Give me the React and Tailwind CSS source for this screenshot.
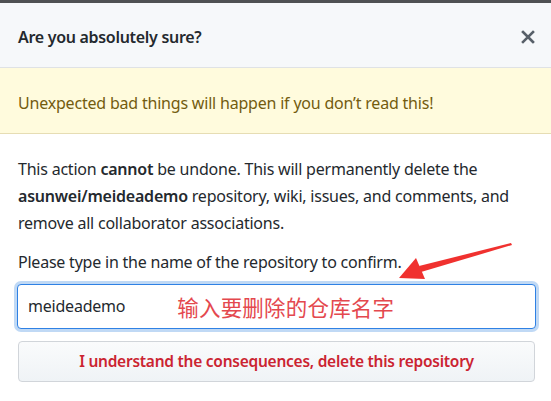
import React from 'react'

// ─── Close glyph ──────────────────────────────────────────────────────────────
function CloseIcon() {
  return (
    <svg width="14" height="14" viewBox="0 0 14 14" aria-hidden="true">
      <path d="M2 2 L12 12 M12 2 L2 12" stroke="#586069" strokeWidth="2.6" strokeLinecap="square" />
    </svg>
  )
}

// ─── Red annotation arrow drawn over the page ────────────────────────────────
function AnnotationArrow() {
  return (
    <svg
      className="absolute left-0 top-0 pointer-events-none"
      width="551"
      height="401"
      viewBox="0 0 551 401"
      aria-hidden="true"
    >
      <path d="M511 243 L512 245 L421 272 L419 266 Z" fill="#f0312f" />
      <path d="M399 278 L416 258 L425 279 Z" fill="#f0312f" />
    </svg>
  )
}

export default function App() {
  return (
    <div
      className="relative w-[551px] h-[401px] overflow-hidden bg-white text-[#24292e]"
      style={{ fontFamily: '"Noto Sans", "Noto Sans CJK SC", sans-serif' }}
    >
      <div className="h-[3px] bg-[#4f5153]" />

      {/* Header */}
      <div className="h-[65px] flex items-center justify-between pt-[3px] pl-[18px] pr-[16px] bg-[#f6f8fa] border-b border-[#dfe2e5]">
        <h3 className="text-[16px] font-semibold tracking-[-0.3px]">Are you absolutely sure?</h3>
        <CloseIcon />
      </div>

      {/* Flash warning */}
      <div className="h-[66px] flex items-center pt-[4px] pl-[18px] bg-[#fffbdd] border-b border-[#e6ddb4] text-[16px] text-[#735c0f] tracking-[-0.2px]">
        Unexpected bad things will happen if you don’t read this!
      </div>

      {/* Body */}
      <div className="pt-[22px] pl-[18px] pr-[15px] text-[16px] leading-[27px] tracking-[-0.22px]">
        <p>
          This action <strong className="font-semibold">cannot</strong> be undone. This will permanently delete the{' '}
          <strong className="font-semibold">asunwei/meideademo</strong> repository, wiki, issues, and comments, and
          remove all collaborator associations.
        </p>
        <p className="mt-[12px]">Please type in the name of the repository to confirm.</p>

        <div className="relative mt-[8px] -ml-px h-[45px] w-[519px] flex items-center px-[10px] rounded-[4px] border border-[#2f81e4] bg-white shadow-[0_0_0_3px_rgba(3,102,214,0.25)]">
          <span className="text-[16px]">meideademo</span>
          <span
            className="ml-[52px] text-[21.5px] text-[#e4484e] tracking-[0.2px]"
            style={{ fontFamily: '"Noto Sans CJK SC", sans-serif' }}
          >
            输入要删除的仓库名字
          </span>
        </div>

        <button className="mt-[12px] h-[41px] w-[517px] rounded-[4px] border border-[#d1d5da] bg-gradient-to-b from-[#fafbfc] to-[#eff3f6] text-[15.5px] font-semibold text-[#cb2431] tracking-[-0.25px]">
          I understand the consequences, delete this repository
        </button>
      </div>

      <AnnotationArrow />
    </div>
  )
}
